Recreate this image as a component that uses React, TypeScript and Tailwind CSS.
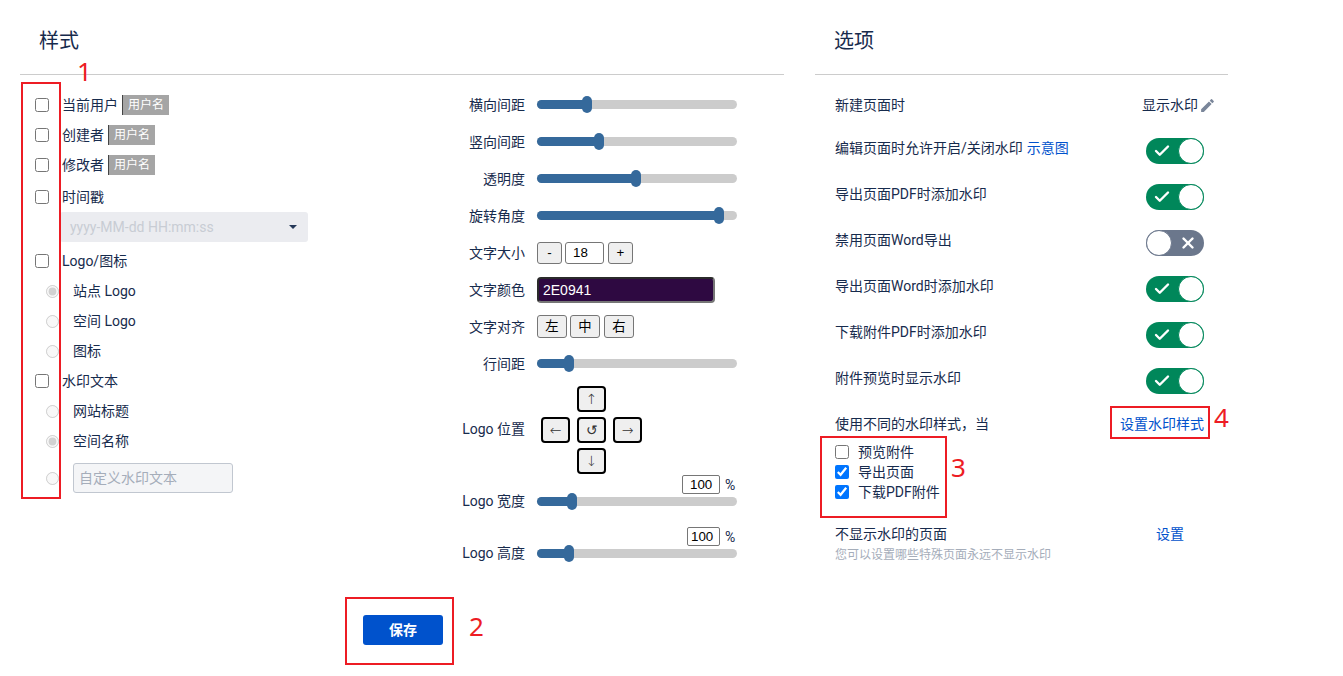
import { Check, X } from "lucide-react"
import { MdEdit } from "react-icons/md"

const textFont = "font-['Roboto','Noto_Sans_CJK_SC',sans-serif]"
const controlFont = "font-['Liberation_Sans','Noto_Sans_CJK_SC',sans-serif] text-[13.33px] text-black"
const nativeButton = "flex items-center justify-center rounded-[3px] border border-[#767676] bg-[#efefef] " + controlFont
const padButton = "flex items-center justify-center w-[29px] h-[26px] rounded-[4px] border-2 border-black bg-[#efefef] font-['DejaVu_Sans',sans-serif] text-[14px] font-light text-[#333]"

function Tag() {
  return (
    <span className="flex items-center h-[20px] px-[5px] ml-[4px] border-l border-[#444] bg-[#a5a5a5] text-white text-[12px]">
      用户名
    </span>
  )
}

function CheckRow({ label, tag, className = "h-[30px]" }: { label: string; tag?: boolean; className?: string }) {
  return (
    <div className={"flex items-center pl-[15px] " + className}>
      <input type="checkbox" className="w-[14px] h-[14px] m-0 mr-[13px]" />
      <span>{label}</span>
      {tag && <Tag />}
    </div>
  )
}

function RadioRow({ label, checked }: { label: string; checked?: boolean }) {
  return (
    <div className="flex items-center h-[30px] pl-[26px]">
      <input type="radio" disabled defaultChecked={checked} name={label} className="w-[13px] h-[13px] m-0 mr-[14px]" />
      <span>{label}</span>
    </div>
  )
}

function Track({ thumb }: { thumb: number }) {
  return (
    <div className="relative w-[200px] h-[9px] rounded-full bg-[#cccccc]">
      <div className="h-full rounded-full bg-[#35699b]" style={{ width: thumb }} />
      <div className="absolute top-[-4px] w-[10px] h-[17px] rounded-[5px] bg-[#35699b]" style={{ left: thumb - 5 }} />
    </div>
  )
}

function Row({ label, children, className = "h-[37px]", labelClass = "" }: { label: string; children: React.ReactNode; className?: string; labelClass?: string }) {
  return (
    <div className={"flex items-center " + className}>
      <div className={"w-[85px] mr-[12px] text-right whitespace-nowrap " + labelClass}>{label}</div>
      {children}
    </div>
  )
}

function PercentLine({ value, width }: { value: string; width: string }) {
  return (
    <div className="flex items-center justify-end w-[297px] h-[19px]">
      <input
        readOnly
        value={value}
        className={width + " h-[19px] border border-[#767676] rounded-[2px] bg-white outline-none " + controlFont}
      />
      <span className="ml-[5px] w-[12px] text-[14px]">%</span>
    </div>
  )
}

function Toggle({ on }: { on: boolean }) {
  if (on) {
    return (
      <div className="flex items-center justify-between w-[58px] h-[26px] rounded-full bg-[#00875a]">
        <Check size={18} strokeWidth={3.2} className="ml-[7px] text-white" />
        <div className="w-[26px] h-[26px] rounded-full bg-white border border-[#00875a]" />
      </div>
    )
  }
  return (
    <div className="flex items-center justify-between w-[58px] h-[26px] rounded-full bg-[#6b778c]">
      <div className="w-[26px] h-[26px] rounded-full bg-white border border-[#6b778c]" />
      <X size={18} strokeWidth={3.2} className="mr-[7px] text-white" />
    </div>
  )
}

const toggles = [
  { label: "编辑页面时允许开启/关闭水印", link: "示意图", on: true },
  { label: "导出页面PDF时添加水印", on: true },
  { label: "禁用页面Word导出", on: false },
  { label: "导出页面Word时添加水印", on: true },
  { label: "下载附件PDF时添加水印", on: true },
  { label: "附件预览时显示水印", on: true },
]

const notes = [
  { box: "left-[21px] top-[82px] w-[40px] h-[417px]" },
  { box: "left-[345px] top-[597px] w-[109px] h-[68px]" },
  { box: "left-[820px] top-[436px] w-[127px] h-[82px]" },
  { box: "left-[1110px] top-[406px] w-[100px] h-[33px]" },
]

export default function App() {
  return (
    <div className={"relative flex w-[1343px] h-[676px] overflow-hidden bg-white pl-[20px] text-[14px] leading-[20px] text-[#172b4d] " + textFont}>
      <section className="w-[764px] shrink-0">
        <div className="flex items-center h-[75px] pt-[7px] pl-[19px] border-b border-[#cccccc] text-[20px]">样式</div>
        <div className="flex">
          <div className="w-[420px] pt-[15px]">
            <CheckRow label="当前用户" tag />
            <CheckRow label="创建者" tag />
            <CheckRow label="修改者" tag />
            <CheckRow label="时间戳" className="h-[32px] pt-[2px]" />
            <div className="flex items-center justify-between w-[248px] h-[30px] ml-[40px] pl-[10px] pr-[11px] rounded-[3px] bg-[#ebecf0] text-[#c8ccd4]">
              <span>yyyy-MM-dd HH:mm:ss</span>
              <span className="w-0 h-0 border-x-[4px] border-t-[4px] border-x-transparent border-t-[#253858]" />
            </div>
            <CheckRow label="Logo/图标" className="h-[30px] mt-[4px]" />
            <RadioRow label="站点 Logo" checked />
            <RadioRow label="空间 Logo" />
            <RadioRow label="图标" />
            <CheckRow label="水印文本" />
            <RadioRow label="网站标题" />
            <RadioRow label="空间名称" checked />
            <div className="flex items-center h-[30px] mt-[7px] pl-[26px]">
              <input type="radio" disabled name="custom" className="w-[13px] h-[13px] m-0 mr-[14px]" />
              <input
                placeholder="自定义水印文本"
                className="w-[160px] h-[30px] px-[5px] rounded-[3px] border border-[#c1c7d0] bg-[#f4f5f7] outline-none placeholder:text-[#a5adba]"
              />
            </div>
          </div>

          <div className="pt-[11px]">
            <Row label="横向间距"><Track thumb={50} /></Row>
            <Row label="竖向间距"><Track thumb={62} /></Row>
            <Row label="透明度"><Track thumb={99} /></Row>
            <Row label="旋转角度"><Track thumb={182} /></Row>
            <Row label="文字大小">
              <div className="flex items-center">
                <button className={nativeButton + " w-[25px] h-[22px]"}>-</button>
                <input readOnly value="18" className={"w-[39px] h-[22px] ml-[3px] mr-[4px] pl-[7px] border border-[#767676] rounded-[3px] bg-white outline-none " + controlFont} />
                <button className={nativeButton + " w-[25px] h-[22px]"}>+</button>
              </div>
            </Row>
            <Row label="文字颜色">
              <div className="flex items-center w-[178px] h-[26px] pl-[4px] rounded-[4px] border-2 border-[#2a2a2a] border-r-[#767676] border-b-[#767676] bg-[#2e0941] font-['Liberation_Sans',sans-serif] text-[14px] text-white">
                2E0941
              </div>
            </Row>
            <Row label="文字对齐">
              <div className="flex gap-[3px]">
                <button className={nativeButton + " w-[30px] h-[23px]"}>左</button>
                <button className={nativeButton + " w-[30px] h-[23px] mr-[1px]"}>中</button>
                <button className={nativeButton + " w-[30px] h-[23px]"}>右</button>
              </div>
            </Row>
            <Row label="行间距"><Track thumb={32} /></Row>
            <Row label="Logo 位置" className="h-[88px] mt-[4px]" labelClass="mb-[2px]">
              <div className="grid grid-cols-[29px_29px_29px] grid-rows-[26px_26px_26px] gap-x-[7px] gap-y-[5px] ml-[4px]">
                <button className={padButton + " col-start-2"}>↑</button>
                <button className={padButton + " col-start-1"}>←</button>
                <button className={padButton}>↺</button>
                <button className={padButton}>→</button>
                <button className={padButton + " col-start-2"}>↓</button>
              </div>
            </Row>
            <div className="mt-[1px]">
              <PercentLine value="100" width="w-[38px] pl-[7px]" />
            </div>
            <Row label="Logo 宽度" className="h-[17px] mt-[-1px]" labelClass="mb-[2px]"><Track thumb={35} /></Row>
            <div className="mt-[17px]">
              <PercentLine value="100" width="w-[33px] pl-[3px]" />
            </div>
            <Row label="Logo 高度" className="h-[17px] mt-[-1px]" labelClass="mb-[2px]"><Track thumb={32} /></Row>
          </div>
        </div>
        <div className="mt-[53px] pl-[343px]">
          <button className="w-[80px] h-[30px] rounded-[3px] bg-[#0052cc] text-white text-[14px] font-bold">保存</button>
        </div>
      </section>

      <section className="w-[413px] ml-[31px] shrink-0">
        <div className="flex items-center h-[75px] pt-[7px] pl-[19px] border-b border-[#cccccc] text-[20px]">选项</div>
        <div className="pl-[20px] pr-[24px]">
          <div className="flex items-center justify-between h-[38px] mt-[11px] mb-[4px]">
            <span>新建页面时</span>
            <span className="flex items-center -mr-[12px]">
              显示水印
              <MdEdit size={17} className="ml-[1px] text-[#7a869a]" />
            </span>
          </div>
          {toggles.map((t) => (
            <div key={t.label} className="flex items-start justify-between h-[46px] pt-[10px]">
              <span>
                {t.label}
                {t.link && <span className="ml-[4px] text-[#0052cc]">{t.link}</span>}
              </span>
              <Toggle on={t.on} />
            </div>
          ))}
          <div className="flex items-start justify-between h-[30px] pt-[10px]">
            <span>使用不同的水印样式，当</span>
            <span className="text-[#0052cc]">设置水印样式</span>
          </div>
          <div className="mt-[8px]">
            <label className="flex items-center h-[20px]">
              <input type="checkbox" className="w-[14px] h-[14px] m-0 mr-[9px]" />
              预览附件
            </label>
            <label className="flex items-center h-[20px]">
              <input type="checkbox" defaultChecked className="w-[14px] h-[14px] m-0 mr-[9px]" />
              导出页面
            </label>
            <label className="flex items-center h-[20px]">
              <input type="checkbox" defaultChecked className="w-[14px] h-[14px] m-0 mr-[9px]" />
              下载PDF附件
            </label>
          </div>
          <div className="flex justify-between mt-[22px] pr-[20px]">
            <span>不显示水印的页面</span>
            <span className="text-[#0052cc]">设置</span>
          </div>
          <div className="mt-[1px] text-[12px] text-[#a5adba]">您可以设置哪些特殊页面永远不显示水印</div>
        </div>
      </section>

      {/* red annotations drawn over the screenshot */}
      {notes.map((n) => (
        <div key={n.box} className={"absolute border-2 border-[#ed1c24] " + n.box} />
      ))}
      <span className="absolute left-[77px] top-[58px] font-['Noto_Sans',sans-serif] text-[26px] leading-[26px] text-[#ed1c24]">1</span>
      <span className="absolute left-[469px] top-[613px] font-['Noto_Sans',sans-serif] text-[26px] leading-[26px] text-[#ed1c24]">2</span>
      <span className="absolute left-[951px] top-[454px] font-['Noto_Sans',sans-serif] text-[26px] leading-[26px] text-[#ed1c24]">3</span>
      <span className="absolute left-[1214px] top-[404px] font-['Noto_Sans',sans-serif] text-[26px] leading-[26px] text-[#ed1c24]">4</span>
    </div>
  )
}
